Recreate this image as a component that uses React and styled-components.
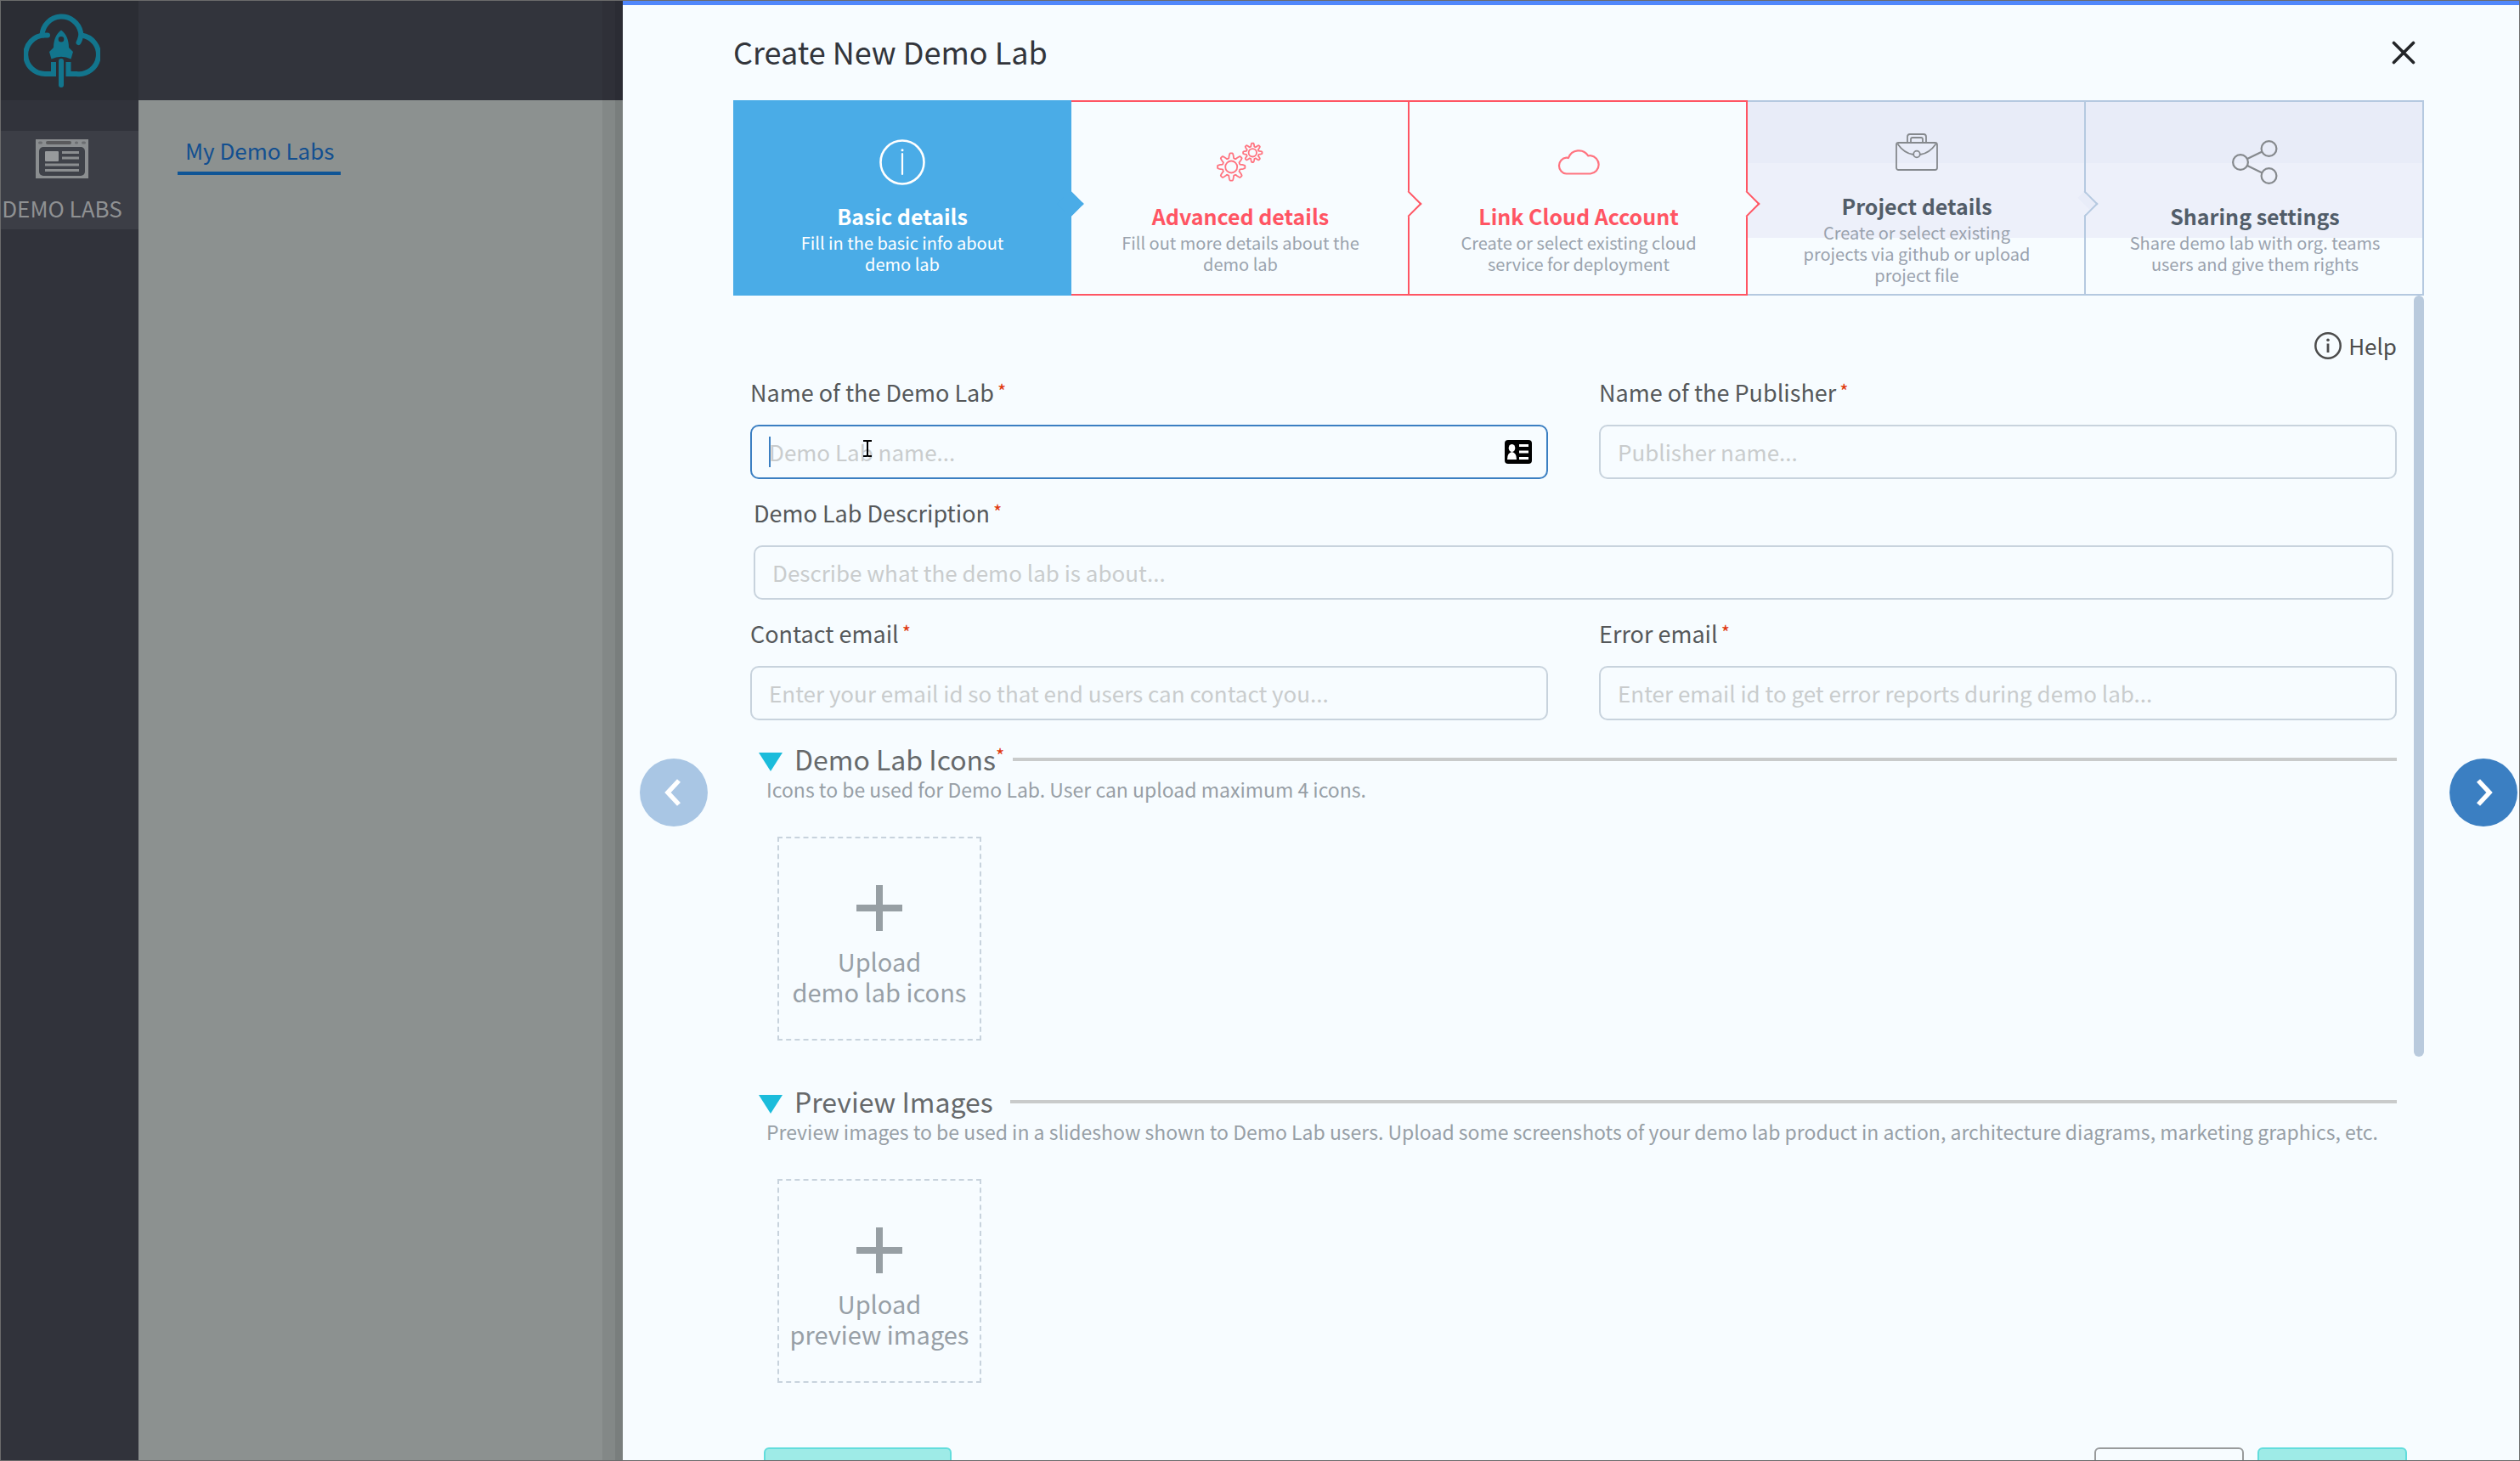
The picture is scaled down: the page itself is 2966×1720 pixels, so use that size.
import React from "react";
import styled, { createGlobalStyle, css } from "styled-components";

const colors = {
  page: "#f7fcff",
  line: "#c8d3dd",
  blue: "#3b7fc2",
  danger: "#ff5563",
  muted: "#979fa6",
};

const GlobalStyle = createGlobalStyle`
  *, *::before, *::after { box-sizing: border-box; }
  body {
    margin: 0;
    font-family: "Noto Sans CJK SC", "Noto Sans", sans-serif;
    font-size: 26px;
    line-height: 36px;
    color: #55585a;
    background: ${colors.page};
  }
  button, input { font: inherit; color: inherit; margin: 0; }
  button { background: none; border: 0; padding: 0; cursor: pointer; }
  h1, h2, p { margin: 0; font-weight: 400; }
`;

/* ---------- Page shell ---------- */

const Frame = styled.div`
  display: grid;
  grid-template-columns: 162px 570px minmax(0, 1fr);
  height: 100vh;
  overflow: hidden;
  border: 1px solid #6b6b6b;
`;

const Sidebar = styled.nav`
  display: flex;
  flex-direction: column;
  gap: 36px;
  background: #31333b;
`;

const LogoCell = styled.div`
  display: flex;
  height: 117px;
  padding: 12px 0 0 27px;
  background: #2b2d34;
`;

const SidebarItem = styled.a`
  display: flex;
  flex-direction: column;
  align-items: center;
  gap: 20px;
  height: 116px;
  padding: 10px 18px 0 0;
  background: #3c3e46;
  color: #8f9193;
  line-height: 30px;
  white-space: nowrap;
  text-decoration: none;
`;

const Workspace = styled.main`
  background: #8c9190;
`;

const TopBar = styled.header`
  height: 117px;
  background: #32343c;
`;

const TabLink = styled.a`
  display: inline-block;
  margin: 41px 0 0 46px;
  padding: 0 8px 7px 9px;
  border-bottom: 4px solid #0f5596;
  color: #124f90;
  text-decoration: none;
`;

/* ---------- Drawer ---------- */

const Drawer = styled.section`
  position: relative;
  display: grid;
  grid-template-columns: 80px minmax(0, 1fr) 80px;
  align-items: start;
  gap: 30px;
  padding: 0 2px 0 20px;
  border-top: 5px solid #5087fb;
  background: ${colors.page};
  box-shadow: -9px 0 0 rgba(0, 0, 0, 0.07), -24px 0 0 rgba(0, 0, 0, 0.06);
`;

const PagerButton = styled.button`
  display: flex;
  align-items: center;
  justify-content: center;
  width: 80px;
  height: 80px;
  margin-top: calc(50vh + 27px);
  border-radius: 50%;
  background: ${colors.blue};
  &:disabled { background: #a9c6e4; cursor: default; }
`;

const DrawerHeader = styled.header`
  display: flex;
  align-items: center;
  justify-content: space-between;
  height: 112px;
  padding-right: 10px;
`;

const DrawerTitle = styled.h1`
  padding-bottom: 4px;
  font-size: 36px;
  line-height: 48px;
  color: #32353b;
`;

const IconButton = styled.button`
  display: flex;
`;

/* ---------- Stepper ---------- */

const Stepper = styled.nav`
  display: grid;
  grid-template-columns: repeat(5, minmax(0, 1fr));
  height: 230px;
`;

const stepTones = {
  active: css`
    --line: #4aace7; --title: #fff; --text: #fff; --icon: #fff; --notch: #4aace7;
    background: #4aace7;
  `,
  error: css`
    --line: ${colors.danger}; --title: ${colors.danger}; --text: #9aa3ad; --icon: #ff7480; --notch: ${colors.page};
    background: ${colors.page};
  `,
  idle: css`
    --line: #b5c9e0; --title: #525d69; --text: #9aa2ae; --icon: #85898d;
    --notch: linear-gradient(#e8ecf8 50%, #edf0fa 50%);
    background: linear-gradient(#e8ecf8 32%, #edf0fa 32%, #edf0fa 71%, ${colors.page} 71%);
  `,
};

const Step = styled.button`
  position: relative;
  display: flex;
  flex-direction: column;
  align-items: center;
  justify-content: center;
  padding-left: 2px;
  border: solid var(--line);
  border-width: 2px 2px 2px 0;
  ${(p) => stepTones[p.$tone]}

  &:not(:last-child)::after {
    content: "";
    position: absolute;
    z-index: 1;
    top: calc(50% - 4px);
    right: -12px;
    width: 22px;
    height: 22px;
    border: solid var(--line);
    border-width: 2px 2px 0 0;
    background: var(--notch);
    transform: rotate(45deg);
  }
`;

const StepIcon = styled.span`
  display: flex;
  align-items: center;
  height: 94px;
  padding-top: 2px;
  color: var(--icon);
`;

const StepTitle = styled.span`
  padding-bottom: 2px;
  font-size: 25px;
  font-weight: 700;
  line-height: 34px;
  color: var(--title);
`;

const StepText = styled.span`
  font-size: 20px;
  line-height: 25px;
  white-space: pre-line;
  color: var(--text);
`;

/* ---------- Form ---------- */

const ScrollArea = styled.div`
  display: grid;
  grid-template-columns: minmax(0, 1fr) 12px;
  align-items: start;
`;

const ScrollThumb = styled.div`
  height: 896px;
  border-radius: 6px;
  background: #b9cadd;
`;

const Form = styled.form`
  display: flex;
  flex-direction: column;
  padding: 41px 20px 0 20px;
`;

const HelpButton = styled.button`
  display: flex;
  align-items: center;
  align-self: flex-end;
  gap: 8px;
  margin-bottom: 18px;
  color: #4c4c4c;
`;

const Fields = styled.div`
  display: flex;
  flex-direction: column;
  gap: 21px;
`;

const FieldRow = styled.div`
  display: grid;
  grid-template-columns: repeat(${(p) => p.$columns}, minmax(0, 1fr));
  gap: 60px;
  padding: 0 ${(p) => (p.$columns === 1 ? 4 : 0)}px;
`;

const Field = styled.div`
  display: flex;
  flex-direction: column;
  gap: 19px;
`;

const Label = styled.label`
  display: flex;
  gap: 4px;
  font-size: 27px;
  line-height: 38px;
  color: #55585a;
`;

const Required = styled.span`
  font-size: 22px;
  line-height: 32px;
  color: #e0380c;
`;

const InputWrap = styled.div`
  position: relative;
  display: flex;
`;

const Input = styled.input`
  width: 100%;
  height: 64px;
  padding: 0 20px 2px;
  border: 2px solid ${(p) => (p.$active ? colors.blue : colors.line)};
  border-radius: 10px;
  outline: none;
  background: transparent;
  &::placeholder { color: #c9cccd; opacity: 1; }
`;

const Caret = styled.span`
  position: absolute;
  top: 14px;
  left: 22px;
  width: 2px;
  height: 36px;
  background: ${colors.blue};
`;

const Pointer = styled.svg`
  position: absolute;
  top: 18px;
  left: 133px;
`;

const ContactBadge = styled.svg`
  position: absolute;
  top: 18px;
  right: 19px;
`;

/* ---------- Upload sections ---------- */

const Section = styled.section`
  display: flex;
  flex-direction: column;
  margin-top: ${(p) => p.$space}px;
`;

const SectionHead = styled.div`
  display: flex;
  align-items: center;
  gap: ${(p) => (p.$required ? 10 : 20)}px;
  height: 40px;
  padding-left: 10px;
`;

const SectionToggle = styled.button`
  display: flex;
  align-items: center;
  gap: 14px;
`;

const SectionTitle = styled.h2`
  padding-bottom: 2px;
  font-size: 32px;
  line-height: 36px;
  color: #66696b;
`;

const SectionStar = styled(Required)`
  align-self: flex-start;
  line-height: 28px;
  margin-left: -10px;
`;

const Rule = styled.span`
  flex: 1;
  height: 4px;
  background: #c9cbcb;
`;

const SectionText = styled.p`
  padding-left: 19px;
  font-size: 23px;
  line-height: 30px;
  color: ${colors.muted};
`;

const UploadTile = styled.button`
  display: flex;
  flex-direction: column;
  align-items: center;
  gap: 17px;
  width: 240px;
  height: 240px;
  margin: 41px 0 0 32px;
  padding-top: 55px;
  border: 2px dashed ${colors.line};
  font-size: 29px;
  white-space: pre-line;
  color: ${colors.muted};
`;

const Footer = styled.footer`
  display: flex;
  gap: 16px;
  margin-top: 76px;
  padding: 0 20px 0 36px;
`;

const FooterButton = styled.button`
  width: ${(p) => (p.$wide ? 221 : 176)}px;
  height: 64px;
  border: 2px solid ${(p) => (p.$outline ? "#999b9c" : "#62dddc")};
  border-radius: 6px;
  background: ${(p) => (p.$outline ? "transparent" : "#9eebe7")};
  margin-right: ${(p) => (p.$wide ? "auto" : 0)};
`;

/* ---------- Drawings ---------- */

const LogoIcon = () => (
  <svg width="90" height="94" viewBox="29 12 90 94" fill="none" stroke="#12758d" strokeWidth="6" strokeLinecap="round" aria-hidden="true">
    <path d="M57 40.500H53M50.500 40A23 23 0 0 1 96 37C97 42 95 46 93.500 49" />
    <path d="M53 40.500A22.600 22.600 0 0 0 55 86H64V72" strokeLinecap="butt" />
    <path d="M97 40.500A22.600 22.600 0 0 1 91 86H81.500V72" strokeLinecap="butt" />
    <path d="M73 71V99" />
    <path stroke="none" fill="#12758d" fillRule="evenodd" d="M73 34.500C79 39 82 46 82 55L87 60L84.500 68.500Q73 63 61.500 68.500L59 60L64 55C64 46 67 39 73 34.500ZM73 42A3.300 3.300 0 1 0 73 48.600A3.300 3.300 0 1 0 73 42Z" />
  </svg>
);

const BrowserIcon = () => (
  <svg width="62" height="46" viewBox="0 0 62 46" aria-hidden="true">
    <rect width="62" height="46" fill="#8b8e90" />
    <rect x="12" y="2" width="30" height="4" rx="2" fill="#5a5a5c" />
    <rect x="3" y="2.500" width="5" height="3" rx="1.500" fill="#6b6d70" />
    <rect x="46" y="2.500" width="4" height="3" rx="1.500" fill="#6b6d70" />
    <rect x="54" y="2.500" width="5" height="3" rx="1.500" fill="#6b6d70" />
    <rect x="4" y="9" width="54" height="34" rx="5" fill="#3f4249" />
    <rect x="11" y="14" width="16" height="12" rx="1" fill="#979a9c" />
    <path d="M31 15.500H51M31 22H51M11 30H51M11 36.500H51" stroke="#8b8e90" strokeWidth="3.200" />
  </svg>
);

const InfoIcon = () => (
  <svg width="56" height="56" viewBox="0 0 56 56" fill="none" stroke="currentColor" aria-hidden="true">
    <circle cx="28" cy="28" r="25.500" strokeWidth="2.600" />
    <path d="M28 18V42" strokeWidth="2.200" strokeLinecap="round" />
    <circle cx="28" cy="13.800" r="1.500" fill="currentColor" stroke="none" />
  </svg>
);

// Eight-toothed gear outline: the radius follows a clipped cosine.
const gearPath = (cx, cy, outer, valley) => {
  const steps = 192;
  const points = [];
  for (let i = 0; i < steps; i += 1) {
    const angle = (i / steps) * Math.PI * 2;
    const wave = Math.max(-1, Math.min(1, Math.cos(angle * 8) * 1.5 - 0.1));
    const radius = (outer + valley) / 2 + ((outer - valley) / 2) * wave;
    points.push(`${(cx + radius * Math.cos(angle)).toFixed(2)} ${(cy + radius * Math.sin(angle)).toFixed(2)}`);
  }
  return `M${points.join("L")}Z`;
};

const GearsIcon = () => (
  <svg width="56" height="48" viewBox="0 0 56 48" fill="none" stroke="currentColor" strokeWidth="1.800" strokeLinejoin="round" aria-hidden="true">
    <path d={gearPath(17.2, 29.5, 16.2, 10.5)} />
    <circle cx="17.200" cy="29.500" r="7" />
    <path d={gearPath(42.3, 12.8, 11.2, 7.4)} />
    <circle cx="42.300" cy="12.800" r="4.700" />
  </svg>
);

const CloudIcon = () => (
  <svg width="52" height="32" viewBox="0 0 52 32" fill="none" stroke="currentColor" strokeWidth="2.200" strokeLinejoin="round" aria-hidden="true">
    <path d="M11.500 29.500H40A10.700 10.700 0 0 0 40 8.200Q38.600 8 37.300 8.500A13 13 0 0 0 14 11Q12.800 10.500 11.500 10.600A9.500 9.500 0 0 0 11.500 29.500Z" />
  </svg>
);

const BriefcaseIcon = () => (
  <svg width="50" height="44" viewBox="0 0 50 44" fill="none" stroke="currentColor" strokeWidth="1.800" strokeLinejoin="round" aria-hidden="true">
    <rect x="1" y="11" width="48" height="32" rx="2.500" />
    <path d="M14 11V4Q14 1 17 1H33Q36 1 36 4V11M18 11V7Q18 5 20 5H30Q32 5 32 7V11" />
    <path d="M2.500 12.500C7 19 14 24 21 25M47.500 12.500C43 19 36 24 29 25" />
    <circle cx="25" cy="24.500" r="3.800" />
  </svg>
);

const ShareIcon = () => (
  <svg width="54" height="54" viewBox="0 0 54 54" fill="none" stroke="currentColor" strokeWidth="2.200" aria-hidden="true">
    <circle cx="10" cy="27" r="8.900" />
    <circle cx="43.500" cy="11" r="8.900" />
    <circle cx="43.500" cy="43" r="8.900" />
    <path d="M18 23L35.500 14.500M18 31L35.500 39.500" />
  </svg>
);

const CloseIcon = () => (
  <svg width="28" height="28" viewBox="0 0 28 28" stroke="#232528" strokeWidth="3.600" strokeLinecap="round" aria-hidden="true">
    <path d="M2.500 2.500L25.500 25.500M25.500 2.500L2.500 25.500" />
  </svg>
);

const HelpIcon = () => (
  <svg width="32" height="32" viewBox="0 0 32 32" fill="none" stroke="#4c4c4c" aria-hidden="true">
    <circle cx="16" cy="16" r="14.700" strokeWidth="2.500" />
    <path d="M16 13.500V24" strokeWidth="2.800" />
    <circle cx="16" cy="9.300" r="1.800" fill="#4c4c4c" stroke="none" />
  </svg>
);

const Chevron = ({ d }) => (
  <svg width="34" height="34" viewBox="0 0 34 34" fill="none" stroke="#fff" strokeWidth="5.500" aria-hidden="true">
    <path d={d} />
  </svg>
);

const Triangle = () => (
  <svg width="28" height="28" viewBox="0 0 28 28" aria-hidden="true">
    <path d="M0 6H28L14 28Z" fill="#1bbcdb" />
  </svg>
);

const PlusIcon = () => (
  <svg width="54" height="54" viewBox="0 0 54 54" stroke="#979fa4" strokeWidth="8" aria-hidden="true">
    <path d="M27 0V54M0 27H54" />
  </svg>
);

/* ---------- Content ---------- */

const steps = [
  { tone: "active", Icon: InfoIcon, title: "Basic details", text: "Fill in the basic info about\ndemo lab" },
  { tone: "error", Icon: GearsIcon, title: "Advanced details", text: "Fill out more details about the\ndemo lab" },
  { tone: "error", Icon: CloudIcon, title: "Link Cloud Account", text: "Create or select existing cloud\nservice for deployment" },
  { tone: "idle", Icon: BriefcaseIcon, title: "Project details", text: "Create or select existing\nprojects via github or upload\nproject file" },
  { tone: "idle", Icon: ShareIcon, title: "Sharing settings", text: "Share demo lab with org. teams\nusers and give them rights" },
];

const fieldRows = [
  [
    { id: "lab-name", label: "Name of the Demo Lab", placeholder: "Demo Lab name...", active: true },
    { id: "publisher", label: "Name of the Publisher", placeholder: "Publisher name..." },
  ],
  [{ id: "description", label: "Demo Lab Description", placeholder: "Describe what the demo lab is about..." }],
  [
    { id: "contact", label: "Contact email", placeholder: "Enter your email id so that end users can contact you..." },
    { id: "error-email", label: "Error email", placeholder: "Enter email id to get error reports during demo lab..." },
  ],
];

const sections = [
  {
    title: "Demo Lab Icons",
    required: true,
    space: 26,
    text: "Icons to be used for Demo Lab. User can upload maximum 4 icons.",
    upload: "Upload\ndemo lab icons",
  },
  {
    title: "Preview Images",
    space: 52,
    text: "Preview images to be used in a slideshow shown to Demo Lab users. Upload some screenshots of your demo lab product in action, architecture diagrams, marketing graphics, etc.",
    upload: "Upload\npreview images",
  },
];

const TextField = ({ id, label, placeholder, active }) => (
  <Field>
    <Label htmlFor={id}>
      {label}
      <Required>*</Required>
    </Label>
    <InputWrap>
      <Input id={id} type="text" placeholder={placeholder} $active={active} />
      {active && (
        <>
          <Caret />
          <ContactBadge width="32" height="28" viewBox="0 0 32 28" aria-hidden="true">
            <rect width="32" height="28" rx="4" fill="#000" />
            <path d="M17 6.500H28M17 14H28M17 21.500H28" stroke="#fff" strokeWidth="3" />
            <ellipse cx="8.500" cy="9.500" rx="3.800" ry="4.500" fill="#fff" />
            <path d="M3 23Q3 15 8.500 14Q14 15 14 23Z" fill="#fff" />
          </ContactBadge>
          <Pointer width="10" height="20" viewBox="0 0 10 20" fill="none" stroke="#000" strokeWidth="2" aria-hidden="true">
            <path d="M0 1H4L5 2L6 1H10M5 2V18M0 19H4L5 18L6 19H10" />
          </Pointer>
        </>
      )}
    </InputWrap>
  </Field>
);

const UploadSection = ({ title, required, space, text, upload }) => (
  <Section $space={space}>
    <SectionHead $required={required}>
      <SectionToggle type="button" aria-expanded="true">
        <Triangle />
        <SectionTitle>{title}</SectionTitle>
      </SectionToggle>
      {required && <SectionStar>*</SectionStar>}
      <Rule />
    </SectionHead>
    <SectionText>{text}</SectionText>
    <UploadTile type="button">
      <PlusIcon />
      {upload}
    </UploadTile>
  </Section>
);

export default function App() {
  return (
    <Frame>
      <GlobalStyle />
      <Sidebar>
        <LogoCell>
          <LogoIcon />
        </LogoCell>
        <SidebarItem href="#labs">
          <BrowserIcon />
          DEMO LABS
        </SidebarItem>
      </Sidebar>
      <Workspace>
        <TopBar />
        <TabLink href="#my-labs">My Demo Labs</TabLink>
      </Workspace>
      <Drawer>
        <PagerButton type="button" aria-label="Previous step" disabled>
          <Chevron d="M23 3L10 17L23 31" />
        </PagerButton>
        <div>
          <DrawerHeader>
            <DrawerTitle>Create New Demo Lab</DrawerTitle>
            <IconButton type="button" aria-label="Close">
              <CloseIcon />
            </IconButton>
          </DrawerHeader>
          <Stepper>
            {steps.map(({ tone, Icon, title, text }) => (
              <Step key={title} type="button" $tone={tone}>
                <StepIcon>
                  <Icon />
                </StepIcon>
                <StepTitle>{title}</StepTitle>
                <StepText>{text}</StepText>
              </Step>
            ))}
          </Stepper>
          <ScrollArea>
            <Form>
              <HelpButton type="button">
                <HelpIcon />
                Help
              </HelpButton>
              <Fields>
                {fieldRows.map((row) => (
                  <FieldRow key={row[0].id} $columns={row.length}>
                    {row.map((field) => (
                      <TextField key={field.id} {...field} />
                    ))}
                  </FieldRow>
                ))}
              </Fields>
              {sections.map((section) => (
                <UploadSection key={section.title} {...section} />
              ))}
            </Form>
            <ScrollThumb />
          </ScrollArea>
          <Footer>
            <FooterButton type="button" aria-label="Save draft" $wide />
            <FooterButton type="button" aria-label="Cancel" $outline />
            <FooterButton type="button" aria-label="Next" />
          </Footer>
        </div>
        <PagerButton type="button" aria-label="Next step">
          <Chevron d="M11 3L24 17L11 31" />
        </PagerButton>
      </Drawer>
    </Frame>
  );
}
